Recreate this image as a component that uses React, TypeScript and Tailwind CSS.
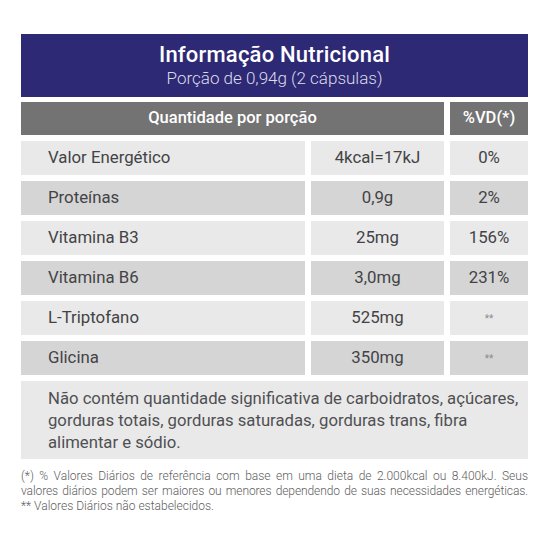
import React from 'react';

const rows = [
  { name: 'Valor Energético', qty: '4kcal=17kJ', vd: '0%', dark: false },
  { name: 'Proteínas', qty: '0,9g', vd: '2%', dark: true },
  { name: 'Vitamina B3', qty: '25mg', vd: '156%', dark: false },
  { name: 'Vitamina B6', qty: '3,0mg', vd: '231%', dark: true },
  { name: 'L-Triptofano', qty: '525mg', vd: '**', dark: false },
  { name: 'Glicina', qty: '350mg', vd: '**', dark: true },
];

export default function App() {
  return (
    <div className="w-[550px] h-[550px] bg-white pl-[21px] pr-[22px] pt-[34px] font-['Roboto',sans-serif]">
      <div className="h-[63px] bg-[#2e2975] flex flex-col items-center justify-center text-white">
        <h1 className="text-[22px] font-medium leading-[24px] tracking-[0.2px]">Informação Nutricional</h1>
        <p className="text-[17px] font-light leading-[21px] mt-[1px] text-[#dcdbea]">Porção de 0,94g (2 cápsulas)</p>
      </div>

      <div className="mt-[5px] grid grid-cols-[423px_78px] gap-[6px] h-[33px] text-white text-[16.5px] font-medium">
        <div className="bg-[#737374] flex items-center justify-center">Quantidade por porção</div>
        <div className="bg-[#737374] flex items-center justify-center">%VD(*)</div>
      </div>

      {rows.map((r, i) => {
        const bg = r.dark ? 'bg-[#d5d5d6]' : 'bg-[#e9e9ea]';
        return (
          <div key={i} className="mt-[6px] grid grid-cols-[284px_133px_78px] gap-[6px] h-[34px] text-[16.8px] text-[#434345]">
            <div className={`${bg} flex items-center pl-[27px]`}>{r.name}</div>
            <div className={`${bg} flex items-center justify-center`}>{r.qty}</div>
            <div className={`${bg} flex items-center justify-center ${r.vd === '**' ? 'text-[10px] text-[#8a8a8c]' : ''}`}>{r.vd}</div>
          </div>
        );
      })}

      <div className="mt-[6px] h-[78px] bg-[#e9e9ea] pl-[27px] pt-[7px] text-[16.7px] leading-[22px] text-[#505052] whitespace-nowrap">
        Não contém quantidade significativa de carboidratos, açúcares,
        <br />
        gorduras totais, gorduras saturadas, gorduras trans, fibra
        <br />
        alimentar e sódio.
      </div>

      <div className="mt-[10px] text-[12px] leading-[15px] text-[#5e5e60] font-light">
        <p className="text-justify [text-align-last:justify]">(*) % Valores Diários de referência com base em uma dieta de 2.000kcal ou 8.400kJ. Seus</p>
        <p className="text-justify [text-align-last:justify] tracking-[-0.1px]">valores diários podem ser maiores ou menores dependendo de suas necessidades energéticas.</p>
        <p>** Valores Diários não estabelecidos.</p>
      </div>
    </div>
  );
}
